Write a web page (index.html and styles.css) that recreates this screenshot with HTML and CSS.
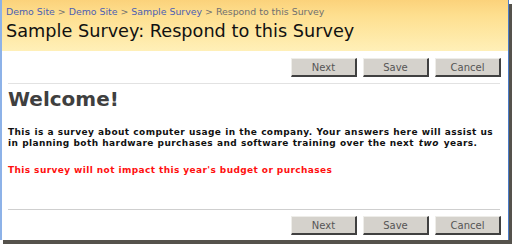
FILE: index.html
```html
<!DOCTYPE html>
<html>
<head>
<meta charset="utf-8">
<link rel="stylesheet" href="styles.css">
</head>
<body>
<div class="window">
  <div class="header">
    <div class="crumbs"><a>Demo Site</a> <span class="sep">&gt;</span> <a>Demo Site</a> <span class="sep">&gt;</span> <a>Sample Survey</a> <span class="sep">&gt;</span> <span class="cur">Respond to this Survey</span></div>
    <div class="title">Sample Survey: Respond to this Survey</div>
  </div>
  <div class="content">
    <div class="buttons top">
      <button class="btn">Next</button>
      <button class="btn">Save</button>
      <button class="btn">Cancel</button>
    </div>
    <div class="rule top-rule"></div>
    <h1 class="welcome">Welcome!</h1>
    <p class="intro">This is a survey about computer usage in the company. Your answers here will assist us in planning both hardware purchases and software training over the next <i>two</i> years.</p>
    <p class="note">This survey will not impact this year's budget or purchases</p>
    <div class="rule bottom-rule"></div>
    <div class="buttons bottom">
      <button class="btn">Next</button>
      <button class="btn">Save</button>
      <button class="btn">Cancel</button>
    </div>
  </div>
</div>
</body>
</html>
```
FILE: styles.css
```css
html, body {
  margin: 0;
  padding: 0;
  background: #ffffff;
}
body {
  width: 512px;
  height: 244px;
  overflow: hidden;
  font-family: "DejaVu Sans", Verdana, sans-serif;
}
.window {
  box-sizing: border-box;
  width: 509px;
  height: 240px;
  background: #fff;
  border-left: 2px solid #8db2e8;
  border-right: 1px solid #4b7cc8;
  box-shadow: 3px 4px 0 #55524c;
  display: flex;
  flex-direction: column;
}
.header {
  height: 51px;
  box-sizing: border-box;
  background: linear-gradient(#fbd27b 0%, #fedf8f 30%, #fff0b8 100%);
  padding: 6px 0 0 4px;
}
.crumbs {
  font-size: 9.4px;
  line-height: 12px;
  color: #777;
  white-space: nowrap;
}
.crumbs a {
  color: #4c5fb4;
}
.crumbs .sep, .crumbs .cur {
  color: #707070;
}
.title {
  font-size: 17.7px;
  line-height: 22px;
  margin-top: 2px;
  color: #111;
  white-space: nowrap;
}
.content {
  padding: 0 7px 0 6px;
  display: flex;
  flex-direction: column;
}
.buttons {
  display: flex;
  justify-content: flex-end;
  gap: 6px;
}
.buttons.top {
  margin-top: 7px;
}
.btn {
  box-sizing: border-box;
  width: 66px;
  height: 19px;
  padding: 0;
  background: #d5d2cc;
  border-style: solid;
  border-width: 1px 2px 2px 1px;
  border-color: #eeede9 #404040 #404040 #eeede9;
  font-family: "DejaVu Sans", Verdana, sans-serif;
  font-size: 10px;
  color: #555;
}
.rule {
  height: 1px;
  background: #d8d8d8;
}
.top-rule {
  margin-top: 6px;
  margin-right: 1px;
  background: #e2e2e2;
}
.welcome {
  margin: 2px 0 0 0;
  font-size: 20px;
  line-height: 26px;
  font-weight: bold;
  color: #3f3f3f;
}
.intro {
  margin: 15px 0 0 0;
  font-size: 9px;
  line-height: 11px;
  font-weight: bold;
  color: #111;
  letter-spacing: 0.4px;
  word-spacing: 0.3px;
}
.intro i {
  font-weight: bold;
  display: inline-block;
  margin: 0 1px;
}
.note {
  margin: 16px 0 0 0;
  font-size: 9px;
  line-height: 11px;
  font-weight: bold;
  color: #ff1010;
  letter-spacing: 0.4px;
}
.bottom-rule {
  margin-top: 33px;
  margin-right: 1px;
  background: #cfcfcf;
}
.buttons.bottom {
  margin-top: 6px;
}
```
